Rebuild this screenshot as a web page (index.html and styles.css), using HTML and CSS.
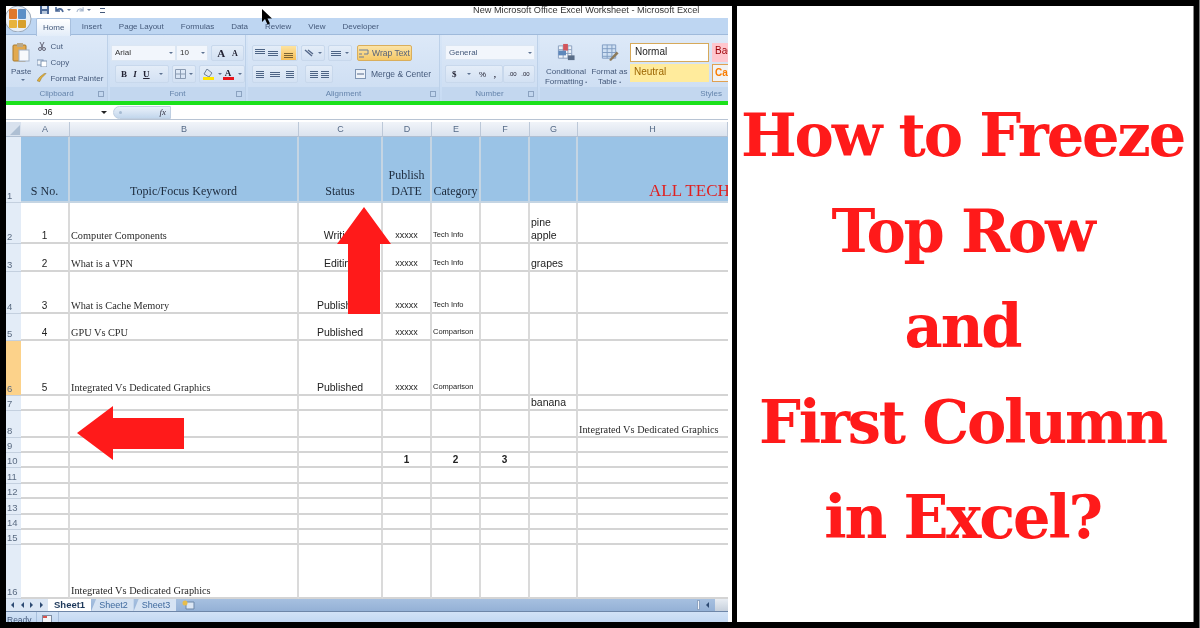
FILE: index.html
```html
<!DOCTYPE html>
<html lang="en">
<head>
<meta charset="utf-8">
<title>How to Freeze Top Row and First Column in Excel?</title>
<link rel="stylesheet" href="styles.css">
</head>
<body>
<main class="page">
  <section class="shot">
    <div class="excel">
      <div class="titlebar">
        <div class="office">
          <svg width="26" height="26" viewBox="0 0 26 26"><circle cx="12" cy="13" r="13" fill="#e8eef6" stroke="#9aa8b8"/><rect x="3" y="3" width="8" height="10" rx="1" fill="#e0782a"/><rect x="12" y="3" width="8" height="10" rx="1" fill="#5c8fc7"/><rect x="3" y="14" width="8" height="8" rx="1" fill="#e8b33c"/><rect x="12" y="14" width="8" height="8" rx="1" fill="#d8a02c"/></svg>
        </div>
        <div class="qat">
          <svg width="9" height="8" viewBox="0 0 9 8"><rect width="9" height="8" fill="#4a6796"/><rect x="2" y="0" width="5" height="3" fill="#dfe8f3"/><rect x="2" y="5" width="5" height="3" fill="#b8c8dc"/></svg>
          <svg class="qat-undo" width="9" height="8" viewBox="0 0 9 8"><path d="M1 1v4h4M1 5c2-3 6-3 7 1" fill="none" stroke="#4a6796" stroke-width="1.6"/></svg>
          <span class="qat-drop"></span>
          <svg class="qat-redo" width="8" height="8" viewBox="0 0 9 8"><path d="M8 1v4H4M8 5C6 2 2 2 1 6" fill="none" stroke="#a9b9cf" stroke-width="1.4"/></svg>
          <span class="qat-drop"></span>
          <span class="qat-more"></span>
        </div>
        <div class="doc-title">New Microsoft Office Excel Worksheet - Microsoft Excel</div>
      </div>

      <nav class="tabs">
        <span class="tab tab-on">Home</span><span class="tab">Insert</span><span class="tab">Page Layout</span><span class="tab">Formulas</span><span class="tab">Data</span><span class="tab">Review</span><span class="tab">View</span><span class="tab">Developer</span>
      </nav>

      <div class="ribbon">
        <div class="group g-clip">
          <div class="g-body clip-body">
            <div class="paste">
              <svg width="18" height="20" viewBox="0 0 18 20"><rect x="1" y="3" width="13" height="16" rx="1" fill="#e2a94e" stroke="#a97a2c"/><rect x="5" y="1" width="6" height="4" fill="#b9a98a"/><rect x="7" y="8" width="10" height="11" fill="#f7f9fc" stroke="#9fb0c6"/></svg>
              <span class="paste-label">Paste</span>
              <span class="arrow-d"></span>
            </div>
            <ul class="clip-list">
              <li><svg width="10" height="9" viewBox="0 0 10 9"><path d="M3 0l3 6M7 0L4 6" stroke="#667" fill="none"/><circle cx="3" cy="7" r="1.5" fill="none" stroke="#667"/><circle cx="7" cy="7" r="1.5" fill="none" stroke="#667"/></svg>Cut</li>
              <li><svg width="10" height="9" viewBox="0 0 10 9"><rect x="0" y="2" width="6" height="5" fill="#eef3f9" stroke="#7f95b3"/><rect x="4" y="3" width="6" height="6" fill="#fff" stroke="#7f95b3"/></svg>Copy</li>
              <li><svg width="10" height="10" viewBox="0 0 11 10"><path d="M10 0L5 5 3 9 0 8l3-4 5-4z" fill="#e2b13e" stroke="#8a6a22" stroke-width=".5"/></svg>Format Painter</li>
            </ul>
          </div>
          <div class="g-label">Clipboard<i class="launch"></i></div>
        </div>

        <div class="group g-font">
          <div class="g-body font-body">
            <div class="ctrl-row">
              <div class="field f-name">Arial<span class="arrow-d"></span></div>
              <div class="field f-size">10<span class="arrow-d"></span></div>
              <div class="btn b-grow"><b>A</b><b class="small">A</b></div>
            </div>
            <div class="ctrl-row row-two">
              <div class="btn b-biu"><b>B</b><b><em>I</em></b><b><u>U</u></b><span class="arrow-d"></span></div>
              <div class="btn b-border"><svg width="11" height="10" viewBox="0 0 11 10"><path d="M.5.5h10v9H.5zM5.5.5v9M.5 5h10" fill="none" stroke="#8a9bb2"/></svg><span class="arrow-d"></span></div>
              <div class="btn b-fill"><span class="swatch-wrap"><svg width="10" height="8" viewBox="0 0 10 8"><path d="M4 0l5 4-3 4-5-3z" fill="#dfe6ef" stroke="#6d7f96"/></svg><i class="swatch yellow"></i></span><span class="arrow-d"></span><span class="swatch-wrap"><b class="color-a">A</b><i class="swatch red"></i></span><span class="arrow-d"></span></div>
            </div>
          </div>
          <div class="g-label">Font<i class="launch"></i></div>
        </div>

        <div class="group g-align">
          <div class="g-body align-body">
            <div class="ctrl-row">
              <div class="btn b-three"><i class="lines top"></i><i class="lines mid"></i><i class="lines bot on"></i></div>
              <div class="btn b-orient"><svg width="11" height="9" viewBox="0 0 11 9"><path d="M1 1l7 6M4 1l5 4" stroke="#55688a" stroke-width="1.4" fill="none"/></svg><span class="arrow-d"></span></div>
              <div class="btn b-rtl"><i class="lines mid"></i><span class="arrow-d"></span></div>
              <div class="btn b-wrap"><svg width="11" height="10" viewBox="0 0 11 10"><path d="M0 2h9v4H5M0 6h3M0 9h5" fill="none" stroke="#6a7d9a"/></svg>Wrap Text</div>
            </div>
            <div class="ctrl-row row-two">
              <div class="btn b-three"><i class="lines left"></i><i class="lines mid"></i><i class="lines right"></i></div>
              <div class="btn b-indent"><i class="lines left"></i><i class="lines right"></i></div>
              <div class="plain-merge"><svg width="11" height="10" viewBox="0 0 11 10"><rect x=".5" y=".5" width="10" height="9" fill="#eef3f9" stroke="#7f95b3"/><path d="M2 5h7" stroke="#55688a"/></svg>Merge &amp; Center<span class="arrow-d"></span></div>
            </div>
          </div>
          <div class="g-label">Alignment<i class="launch"></i></div>
        </div>

        <div class="group g-num">
          <div class="g-body num-body">
            <div class="field f-general">General<span class="arrow-d"></span></div>
            <div class="ctrl-row row-two">
              <div class="btn b-dollar"><b>$</b><span class="arrow-d"></span><span>%</span><b class="comma">,</b></div>
              <div class="btn b-dec"><span>.00</span><span>.00</span></div>
            </div>
          </div>
          <div class="g-label">Number<i class="launch"></i></div>
        </div>

        <div class="group g-styles">
          <div class="g-body styles-body">
            <div class="big-btn">
              <svg width="20" height="20" viewBox="0 0 20 20"><path d="M2 3h14v13H2z" fill="#eef3f9" stroke="#8a9fbe"/><path d="M2 7h14M2 11h14M7 3v13M12 3v13" stroke="#8a9fbe"/><rect x="7" y="1" width="5" height="7" fill="#d2555c"/><rect x="2" y="8" width="8" height="5" fill="#5d87bb"/><rect x="12" y="13" width="7" height="5" fill="#596d88"/></svg>
              <span>Conditional<br>Formatting <i class="mini">&#8226;</i></span>
            </div>
            <div class="big-btn">
              <svg width="20" height="20" viewBox="0 0 20 20"><path d="M2 2h14v14H2z" fill="#cfe0f3" stroke="#7f9cc2"/><path d="M2 6h14M2 10h14M2 14h14M7 2v14M12 2v14" stroke="#7f9cc2"/><path d="M9 18l8-9 2 2-8 8z" fill="#8c7a5b"/></svg>
              <span>Format as<br>Table <i class="mini">&#8226;</i></span>
            </div>
            <div class="style-grid">
              <div class="st st-normal">Normal</div><div class="st st-bad">Bad</div>
              <div class="st st-neutral">Neutral</div><div class="st st-calc">Calc</div>
            </div>
          </div>
          <div class="g-label g-label-end">Styles</div>
        </div>
      </div>

      <div class="green-line"></div>

      <div class="formula">
        <div class="name-box">J6<span class="arrow-k"></span></div>
        <div class="fx-pill"><span class="fx-dot"></span><em>fx</em></div>
      </div>

      <div class="sheet">
        <div class="corner"><i></i></div><div class="ch">A</div><div class="ch">B</div><div class="ch">C</div><div class="ch">D</div><div class="ch">E</div><div class="ch">F</div><div class="ch">G</div><div class="ch">H</div>

        <div class="rh">1</div><div class="c hd">S No.</div><div class="c hd">Topic/Focus Keyword</div><div class="c hd">Status</div><div class="c hd">Publish<br>DATE</div><div class="c hd">Category</div><div class="c hd"></div><div class="c hd"></div><div class="c hd hd-title">ALL TECH</div>

        <div class="rh">2</div><div class="c n">1</div><div class="c s">Computer Components</div><div class="c a">Writing</div><div class="c x">xxxxx</div><div class="c t">Tech Info</div><div class="c"></div><div class="c g">pine<br>apple</div><div class="c"></div>

        <div class="rh">3</div><div class="c n">2</div><div class="c s">What is a VPN</div><div class="c a">Editing</div><div class="c x">xxxxx</div><div class="c t">Tech Info</div><div class="c"></div><div class="c g">grapes</div><div class="c"></div>

        <div class="rh">4</div><div class="c n">3</div><div class="c s">What is Cache Memory</div><div class="c a">Published</div><div class="c x">xxxxx</div><div class="c t">Tech Info</div><div class="c"></div><div class="c"></div><div class="c"></div>

        <div class="rh">5</div><div class="c n">4</div><div class="c s">GPU Vs CPU</div><div class="c a">Published</div><div class="c x">xxxxx</div><div class="c t">Comparison</div><div class="c"></div><div class="c"></div><div class="c"></div>

        <div class="rh rh-on">6</div><div class="c n">5</div><div class="c s">Integrated Vs Dedicated Graphics</div><div class="c a">Published</div><div class="c x">xxxxx</div><div class="c t">Comparison</div><div class="c"></div><div class="c"></div><div class="c"></div>

        <div class="rh">7</div><div class="c"></div><div class="c"></div><div class="c"></div><div class="c"></div><div class="c"></div><div class="c"></div><div class="c g">banana</div><div class="c"></div>

        <div class="rh">8</div><div class="c"></div><div class="c"></div><div class="c"></div><div class="c"></div><div class="c"></div><div class="c"></div><div class="c"></div><div class="c s">Integrated Vs Dedicated Graphics</div>

        <div class="rh">9</div><div class="c"></div><div class="c"></div><div class="c"></div><div class="c"></div><div class="c"></div><div class="c"></div><div class="c"></div><div class="c"></div>

        <div class="rh">10</div><div class="c"></div><div class="c"></div><div class="c"></div><div class="c b">1</div><div class="c b">2</div><div class="c b">3</div><div class="c"></div><div class="c"></div>

        <div class="rh">11</div><div class="c"></div><div class="c"></div><div class="c"></div><div class="c"></div><div class="c"></div><div class="c"></div><div class="c"></div><div class="c"></div>
        <div class="rh">12</div><div class="c"></div><div class="c"></div><div class="c"></div><div class="c"></div><div class="c"></div><div class="c"></div><div class="c"></div><div class="c"></div>
        <div class="rh">13</div><div class="c"></div><div class="c"></div><div class="c"></div><div class="c"></div><div class="c"></div><div class="c"></div><div class="c"></div><div class="c"></div>
        <div class="rh">14</div><div class="c"></div><div class="c"></div><div class="c"></div><div class="c"></div><div class="c"></div><div class="c"></div><div class="c"></div><div class="c"></div>
        <div class="rh">15</div><div class="c"></div><div class="c"></div><div class="c"></div><div class="c"></div><div class="c"></div><div class="c"></div><div class="c"></div><div class="c"></div>

        <div class="rh">16</div><div class="c"></div><div class="c s">Integrated Vs Dedicated Graphics</div><div class="c"></div><div class="c"></div><div class="c"></div><div class="c"></div><div class="c"></div><div class="c"></div>
      </div>

      <div class="sheetbar">
        <div class="nav"><i class="tri l"></i><i class="tri l"></i><i class="tri r"></i><i class="tri r"></i></div>
        <span class="sheet-tab on">Sheet1</span><span class="sheet-tab">Sheet2</span><span class="sheet-tab">Sheet3</span>
        <svg class="new-sheet" width="16" height="11" viewBox="0 0 16 11"><path d="M5 2h8v7H5z" fill="#dbe6f4" stroke="#6d87a9"/><circle cx="4" cy="3" r="2.500" fill="#e8bd4a"/></svg>
        <div class="hscroll"><i class="thumb"></i><i class="tri l dark"></i><i class="track"></i></div>
      </div>
      <div class="statusbar"><span class="ready">Ready</span><span class="rec"><svg width="10" height="9" viewBox="0 0 10 9"><rect x=".5" y=".5" width="9" height="8" fill="#f4f6fa" stroke="#7f8ea3"/><rect x="1" y="1" width="4" height="2" fill="#d9534f"/></svg></span></div>
    </div>

    <svg class="cursor" width="11" height="16" viewBox="0 0 11 16"><path d="M1 0v13l3-3 2.500 5.500 2.500-1L6.500 9.500H11z" fill="#000"/></svg>
    <svg class="arrow-up" width="54" height="107" viewBox="0 0 54 107"><path d="M27 0l27 37H43v70H11V37H0z" fill="#ff1a1a"/></svg>
    <svg class="arrow-left" width="107" height="54" viewBox="0 0 107 54"><path d="M0 27L36 0v12h71v31H36v11z" fill="#ff1a1a"/></svg>
  </section>

  <section class="headline">
    <h1>How to Freeze<br>Top Row<br>and<br>First Column<br>in Excel?</h1>
  </section>
</main>
</body>
</html>
```
FILE: styles.css
```css
* { box-sizing: border-box; }
html, body { margin: 0; height: 100%; background: #000; }
ul { list-style: none; margin: 0; padding: 0; }

.page {
  width: 1200px; height: 628px; background: #000;
  display: flex; gap: 5px; padding: 6px 0 6px 6px;
  border-right: 1px solid #777; overflow: hidden;
}

/* left: screenshot */
.shot { position: relative; flex: 0 0 726px; background: #fff; padding-right: 4px; overflow: hidden; }
.excel {
  height: 616px; display: flex; flex-direction: column; overflow: hidden;
  font: 8px "Liberation Sans", sans-serif; color: #44597a; background: #fff;
  filter: blur(.5px);
}
.excel > * { min-height: 0; }

.titlebar { flex: 0 0 12px; position: relative; display: flex; background: #fff; }
.office { position: absolute; left: 0; top: 0; z-index: 2; }
.qat { display: flex; align-items: center; padding-left: 34px; height: 8px; }
.qat-undo { margin-left: 6px; }
.qat-redo { margin-left: 5px; }
.qat-drop { width: 0; height: 0; border: 2px solid transparent; border-top-color: #667b99; margin: 2px 0 0 3px; }
.qat-more { width: 5px; height: 5px; margin-left: 9px; border-top: 1px solid #44597a; border-bottom: 1px solid #44597a; }
.doc-title { position: absolute; left: 467px; top: -3px; font: 9.200px/14px "Liberation Sans", sans-serif; color: #333; white-space: nowrap; }

.tabs { flex: 0 0 17px; display: flex; align-items: stretch; background: #bed6f2; padding-left: 30px; border-bottom: 1px solid #9fbadb; }
.tab { padding: 0 8.500px; line-height: 18px; white-space: nowrap; }
.tab-on { background: linear-gradient(#fff, #e3edf9); border: 1px solid #a8c0de; border-bottom: 0; border-radius: 2px 2px 0 0; padding: 0 6px; line-height: 17px; margin-right: 2px; position: relative; z-index: 3; height: 18px; }

.ribbon { flex: 0 0 66px; display: flex; gap: 2px; background: linear-gradient(#d8e6f7, #c7dbf3); }
.group { display: flex; flex-direction: column; border-right: 1px solid #bdd1e9; min-width: 0; overflow: hidden; }
.g-body { flex: 1; background: linear-gradient(#dde9f8, #cfdff3); min-height: 0; }
.g-label { flex: 0 0 13px; position: relative; background: #c3d7ef; text-align: center; font-size: 8px; line-height: 14px; color: #6584ab; }
.g-label-end { text-align: right; padding-right: 6px; }
.launch { position: absolute; right: 3px; top: 4px; width: 6px; height: 6px; border: 1px solid #8ba2c0; }
.g-clip { flex: 0 0 102px; }
.g-font { flex: 0 0 136px; }
.g-align { flex: 0 0 192px; }
.g-num { flex: 0 0 96px; }
.g-styles { flex: 1; border-right: 0; }

.arrow-d { display: inline-block; width: 0; height: 0; border: 2px solid transparent; border-top-color: #5d7292; margin: 2px 0 0 3px; vertical-align: middle; }

.clip-body { display: flex; padding: 3px 0 0 5px; }
.paste { flex: 0 0 18px; display: flex; flex-direction: column; align-items: center; padding-top: 4px; }
.paste-label { font-size: 8px; line-height: 10px; margin-top: 5px; }
.clip-list { margin-left: 6px; }
.clip-list li { display: flex; align-items: center; gap: 3px; height: 16px; white-space: nowrap; }
.clip-list svg { flex: 0 0 auto; }

.ctrl-row { display: flex; gap: 3px; height: 16px; align-items: stretch; }
.row-two { margin-top: 4px; height: 18px; }
.font-body { padding: 10px 0 0 1px; }
.field { background: #f2f6fc; border: 1px solid #dbe6f3; padding-left: 3px; line-height: 14px; display: flex; align-items: center; justify-content: space-between; padding-right: 2px; color: #333; }
.f-name { flex: 0 0 65px; margin-right: -3px; }
.f-size { flex: 0 0 32px; }
.btn { display: flex; align-items: center; justify-content: space-around; background: linear-gradient(#e4edf8, #d3e1f3); border: 1px solid #c8d8ec; border-radius: 2px; color: #223; padding: 0 2px; white-space: nowrap; }
.btn b { font-family: "Liberation Serif", serif; font-size: 9px; }
.b-grow { flex: 0 0 33px; }
.b-grow b { font-size: 11px; }
.b-grow .small { font-size: 8px; }
.b-biu { flex: 0 0 54px; }
.b-border { flex: 0 0 23px; }
.b-fill { flex: 0 0 46px; }
.swatch-wrap { display: flex; flex-direction: column; align-items: center; }
.swatch { display: block; width: 11px; height: 3px; }
.yellow { background: #ffe400; }
.red { background: #e8141c; }
.color-a { line-height: 8px; font-size: 9px; }
.font-body .row-two { padding-left: 4px; }

.align-body { padding: 10px 0 0 4px; }
.b-three { flex: 0 0 46px; padding: 0; overflow: hidden; }
.b-orient { flex: 0 0 21px; }
.b-rtl { flex: 0 0 24px; }
.b-indent { flex: 0 0 28px; margin-left: 4px; }
.b-wrap { flex: 0 0 55px; margin-left: 2px; background: linear-gradient(#fbe3a6, #f6c966); border-color: #d9ae5c; color: #55627a; gap: 2px; font-size: 8.500px; padding: 0 1px; }
.plain-merge { display: flex; align-items: center; gap: 5px; margin-left: 19px; white-space: nowrap; font-size: 8.500px; }
.lines { display: block; width: 10px; height: 7px; background: repeating-linear-gradient(#4d6485 0 1px, transparent 1px 2px); }
.lines.top { height: 5px; margin-bottom: 4px; }
.lines.mid { height: 5px; }
.lines.bot { height: 5px; margin-top: 4px; }
.lines.left { width: 8px; }
.lines.right { width: 8px; }
.lines.on { width: 15px; height: 14px; margin: 0; background: repeating-linear-gradient(#7a6332 0 1px, transparent 1px 2px) center 7px / 9px 5px no-repeat, linear-gradient(#fde3a0, #f6bf58); }

.num-body { padding: 10px 3px 0; }
.f-general { height: 15px; width: 90px; color: #44597a; }
.num-body .row-two { gap: 0; margin-top: 5px; }
.b-dollar { flex: 0 0 58px; }
.b-dec { flex: 0 0 32px; font-size: 6px; }
.b-dollar b { font-size: 9px; }
.comma { font-size: 9px; }

.styles-body { display: flex; padding: 8px 0 0 0; overflow: hidden; }
.big-btn { display: flex; flex-direction: column; align-items: center; flex: 0 0 45px; font-size: 8px; line-height: 10px; text-align: center; white-space: nowrap; }
.big-btn:first-child { margin-left: 3px; flex-basis: 46px; }
.big-btn:nth-child(2) { flex-basis: 41px; }
.big-btn span { margin-top: 5px; }
.mini { font-style: normal; font-size: 5px; }
.style-grid { display: grid; grid-template-columns: 79px 40px; grid-template-rows: 19px 18px; gap: 2px 3px; flex: 0 0 auto; font-size: 10px; line-height: 16px; }
.st { padding-left: 3px; white-space: nowrap; overflow: hidden; }
.st-normal { background: #fff; border: 1px solid #d6a95a; color: #222; padding-left: 4px; }
.st-bad { background: #ffc7ce; color: #9c0006; }
.st-neutral { background: #ffeb9c; color: #9c6500; padding-left: 4px; }
.st-calc { background: #f2f2f2; border: 1px solid #e0a050; color: #fa7d00; font-weight: 700; padding-left: 2px; }

.green-line { flex: 0 0 4px; background: #1be11b; }

.formula { flex: 0 0 15px; display: flex; align-items: center; background: #fff; border-bottom: 1px solid #b8c4d4; }
.name-box { flex: 0 0 107px; padding-left: 37px; color: #222; font-size: 9px; display: flex; align-items: center; justify-content: space-between; padding-right: 6px; }
.arrow-k { width: 0; height: 0; border: 3px solid transparent; border-top-color: #222; margin-top: 3px; }
.fx-pill { width: 58px; height: 13px; background: linear-gradient(#eaf1fa, #c2d6ec); border: 1px solid #bfcfe2; border-radius: 7px 0 0 7px; display: flex; align-items: center; justify-content: space-between; padding: 0 4px 0 5px; font: italic 9px "Liberation Serif", serif; color: #334; }
.fx-dot { width: 3px; height: 3px; border-radius: 50%; background: #a6bbd3; }

.sheet {
  flex: 0 0 auto; margin-top: 2px;
  display: grid;
  grid-template-columns: 15px 49px 229px 84px 49px 49px 49px 48px 150px;
  grid-template-rows: 15px 66px 41px 28px 42px 27px 55px 15px 27px 15px 15px 16px 15px 16px 15px 15px 54px;
  font-family: "Liberation Sans", sans-serif; color: #222;
}
.corner { background: #d9e2ee; position: relative; border-bottom: 1px solid #b0bfd2; }
.corner i { position: absolute; right: 1px; bottom: 1px; border: 5px solid transparent; border-right-color: #aebfd3; border-bottom-color: #aebfd3; }
.ch { background: linear-gradient(#f1f4f9, #dbe3ee); text-align: center; font-size: 9px; line-height: 14px; color: #556a87; border-right: 1px solid #bcc8d8; border-bottom: 1px solid #b0bfd2; }
.rh { background: #e3ecf7; border-bottom: 1px solid #c4d0df; display: flex; align-items: flex-end; padding-left: 1px; font-size: 9.500px; line-height: 13px; color: #5a6b82; white-space: nowrap; }
.rh-on { background: #fcd28a; }
.c { border-right: 2px solid #dadada; border-bottom: 2px solid #d4d4d4; display: flex; align-items: flex-end; justify-content: center; text-align: center; font-size: 10.500px; line-height: 13px; white-space: nowrap; overflow: hidden; min-width: 0; }
.hd { background: #9ac3e6; border-color: #c5d5e3; font: 12px/16px "Liberation Serif", serif; color: #1c2a3c; padding-bottom: 2px; }
.hd-title { justify-content: flex-start; padding-left: 71px; padding-bottom: 0; font-size: 17px; line-height: 20px; color: #e02020; border-right: 0; }
.n { font-size: 10px; }
.s { justify-content: flex-start; padding-left: 1px; font: 10.300px/13px "Liberation Serif", serif; color: #2a2a2a; }
.a { font-size: 10.500px; }
.x { font-size: 9px; }
.t { justify-content: flex-start; padding-left: 1px; font-size: 7.500px; padding-bottom: 1px; }
.g { justify-content: flex-start; text-align: left; padding-left: 1px; }
.b { font-weight: 700; font-size: 10px; }
.c:nth-child(9n) { border-right: 0; }

.sheetbar { flex: 0 0 13px; display: flex; align-items: stretch; background: linear-gradient(#a6c0e0, #94b1d6); border-bottom: 1px solid #6e86a8; position: relative; }
.nav { flex: 0 0 42px; display: flex; align-items: center; justify-content: space-around; background: #dbe6f4; padding: 0 2px; }
.tri { width: 0; height: 0; border: 3px solid transparent; }
.tri.l { border-right-color: #2d4a73; border-left-width: 0; }
.tri.r { border-left-color: #2d4a73; border-right-width: 0; }
.sheet-tab { padding: 0 6px 0 8px; font-size: 9px; line-height: 12px; color: #3f6a9e; background: #d6e3f3; clip-path: polygon(0 100%, 5px 0, 100% 0, 100% 100%); }
.sheet-tab.on { font-size: 9.500px; font-weight: 700; color: #1e395b; background: #fff; clip-path: none; padding: 0 6px; }
.new-sheet { margin: 1px 0 0 5px; }
.hscroll { position: absolute; right: 0; top: 0; bottom: 0; width: 31px; display: flex; align-items: center; }
.thumb { width: 3px; height: 10px; background: #f2f5fa; border: 1px solid #8ea4c2; }
.tri.dark { margin: 0 6px 0 6px; }
.track { flex: 1; align-self: stretch; background: linear-gradient(#e8edf3, #c6d0dc); }

.statusbar { flex: 1; display: flex; gap: 5px; align-items: flex-start; background: linear-gradient(#d2e2f6, #c3d8f2); padding-left: 1px; font-size: 8.500px; overflow: hidden; }
.ready { line-height: 16px; border-right: 1px solid #a9c0dd; padding-right: 4px; }
.rec { padding: 3px 6px 0 0; border-right: 1px solid #a9c0dd; height: 10px; display: block; }

.cursor { position: absolute; left: 255px; top: 3px; }
.arrow-up { position: absolute; left: 331px; top: 201px; }
.arrow-left { position: absolute; left: 71px; top: 400px; }

/* right: headline */
.headline { flex: 0 0 457px; background: #fff; border-right: 1px solid #888; display: flex; align-items: flex-start; justify-content: center; padding: 82px 5px 0 0; }
h1 { margin: 0; text-align: center; font: 700 59px/95.500px "DejaVu Serif", serif; letter-spacing: -2.200px; color: #ff1a1a; white-space: nowrap; }
```
